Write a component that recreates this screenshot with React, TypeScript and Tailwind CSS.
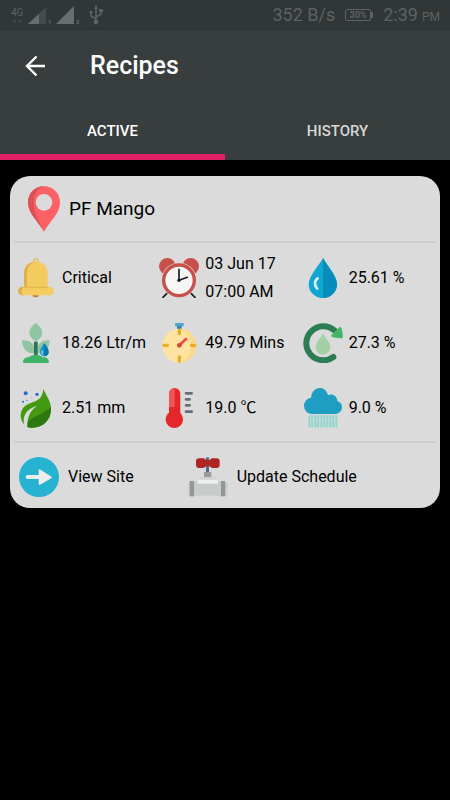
import React, { useState } from 'react';

interface IconProps {
    children: React.ReactNode;
}

const Icon: React.FC<IconProps> = ({ children }) => (
    <svg viewBox="0 0 120 120" className="h-10 w-10 shrink-0" aria-hidden="true">
        {children}
    </svg>
);

const PinIcon = () => (
    <svg viewBox="0 0 102 138" className="h-[46px] w-[34px] shrink-0" aria-hidden="true">
        <path d="M51 1C23 1 3 22 3 50c0 31 30 55 48 87 18-32 48-56 48-87C99 22 79 1 51 1Z" fill="#fd6065" />
        <path d="M51 1C23 1 3 22 3 50c0 31 30 55 48 87C38 108 20 84 20 50 20 24 32 5 51 1Z" fill="#db5156" />
        <circle cx="51" cy="49" r="25" fill="#dbdbdb" />
    </svg>
);

const BellIcon = () => (
    <Icon>
        <circle cx="59" cy="8" r="6" fill="none" stroke="#e3bd58" strokeWidth="4" />
        <path d="M49 110h20c0 6-4 8-10 8s-10-2-10-8Z" fill="#b78f36" />
        <path d="M59 11c24 0 36 15 36 36v42H24V47c0-21 12-36 35-36Z" fill="#f3cb5e" />
        <path d="M59 11c-23 0-35 15-35 36v42h9V47c0-19 10-32 26-36Z" fill="#dcb14d" />
        <rect x="7" y="86" width="106" height="26" rx="12" fill="#f3cb5e" />
        <path d="M24 86h-5a12 12 0 0 0 0 26h5c-9-5-9-20 0-26Z" fill="#dcb14d" />
        <path d="M24 86h71v4H24Z" fill="#e0b751" />
    </Icon>
);

const PlantIcon = () => (
    <Icon>
        <path d="M59 0c13 10 20 19 20 29S71 48 59 55C47 48 40 39 40 29S46 10 59 0Z" fill="#90c5a3" />
        <path d="M18 52c20-2 35 7 37 26v13C34 92 19 80 18 52Z" fill="#90c5a3" />
        <path d="M101 52C81 50 66 59 64 78v13c21 1 36-11 37-39Z" fill="#90c5a3" />
        <rect x="54" y="56" width="11" height="46" fill="#2b7652" />
        <path d="M22 120c-3-10 5-18 16-17 9-10 34-11 42 0 12-2 21 6 18 17Z" fill="#40b466" />
        <path d="M85 61c7 10 13 17 13 26a13 13 0 0 1-26 0c0-9 6-16 13-26Z" fill="#1493cb" />
        <path d="M85 61c7 10 13 17 13 26a13 13 0 0 1-13 13Z" fill="#0879ad" />
        <path d="M79 84c-2 3-1 7 1 9" fill="none" stroke="#fff" strokeWidth="3" strokeLinecap="round" />
    </Icon>
);

const AlarmIcon = () => (
    <Icon>
        <path d="M26 104 12 118M94 104l14 14" stroke="#151a20" strokeWidth="5" strokeLinecap="round" />
        <circle cx="25" cy="25" r="25" fill="#c9504a" />
        <circle cx="95" cy="25" r="25" fill="#c9504a" />
        <circle cx="60" cy="67" r="53" fill="#dbdbdb" />
        <circle cx="60" cy="67" r="46" fill="#f6f6f6" stroke="#c9504a" strokeWidth="10" />
        <path d="M60 67V34M60 67l25-9" stroke="#171c22" strokeWidth="5" strokeLinecap="round" />
        <circle cx="60" cy="67" r="5" fill="#171c22" />
    </Icon>
);

const StopwatchIcon = () => (
    <Icon>
        <rect x="54" y="6" width="14" height="12" fill="#3081a8" />
        <rect x="48" y="0" width="26" height="10" rx="3" fill="#4aa5cf" />
        <circle cx="61" cy="68" r="51" fill="#ffe4a1" />
        <path d="M61 17a51 51 0 0 1 0 102c23-10 36-28 36-51S84 27 61 17Z" fill="#fcd98a" />
        <path d="M61 22v10M61 102v12M15 67h10M97 67h10" stroke="#e7ae24" strokeWidth="10" strokeLinecap="round" />
        <path d="m61 67 20-19" stroke="#ee4d42" strokeWidth="8" strokeLinecap="round" />
        <circle cx="61" cy="67" r="7" fill="#e33f36" />
    </Icon>
);

const DropIcon = () => (
    <Icon>
        <path d="M60 0C70 21 102 52 102 79a42 41 0 0 1-85 0C17 52 50 21 60 0Z" fill="#10a6d2" />
        <path d="M60 0c10 21 42 52 42 79a42 41 0 0 1-42 41Z" fill="#078db9" />
        <path d="M44 61c-11 8-10 22-1 31" fill="none" stroke="#d8f3fa" strokeWidth="8" strokeLinecap="round" />
    </Icon>
);

const CycleIcon = () => (
    <Icon>
        <path d="M91 102A51 51 0 1 1 94 22" fill="none" stroke="#2d7d54" strokeWidth="18" strokeLinecap="round" />
        <path d="m109 14-22 21c-3 3-1 6 3 7l25 3c3 0 4-2 4-5l-4-24c-1-4-4-4-6-2Z" fill="#43b769" stroke="#43b769" strokeWidth="2" />
        <path d="M60 31c7 15 22 28 22 42a22 22 0 0 1-44 0c0-14 15-27 22-42Z" fill="#a3d1a5" />
    </Icon>
);

const LeafIcon = () => (
    <Icon>
        <circle cx="29" cy="16" r="6" fill="#286bd0" />
        <circle cx="63" cy="19" r="5" fill="#286bd0" />
        <circle cx="21" cy="41" r="3" fill="#286bd0" />
        <circle cx="33" cy="37" r="2" fill="#286bd0" />
        <circle cx="47" cy="28" r="1" fill="#286bd0" />
        <path d="M82 3c8 20 25 37 23 64-2 31-28 54-60 52-9 0-15-3-19-8C9 96 9 63 33 50 53 39 78 42 82 3Z" fill="#43990f" />
        <path d="M104 58c5 35-22 64-59 61-9 0-15-3-19-8 22-27 53-29 78-53Z" fill="#2c7811" />
        <path d="M25 114c-7-29 5-51 38-61-24 18-29 37-29 65Z" fill="#dbdbdb" />
    </Icon>
);

const ThermometerIcon = () => (
    <Icon>
        <rect x="30" y="0" width="34" height="95" rx="17" fill="#e3272a" />
        <path d="M47 0a17 17 0 0 0-17 17v40h17Z" fill="#ed5557" />
        <circle cx="46" cy="94" r="26" fill="#e3272a" />
        <path d="M81 16h17M81 34h11M81 52h11M81 71h17" stroke="#696d78" strokeWidth="8" strokeLinecap="round" />
    </Icon>
);

const RainIcon = () => (
    <Icon>
        <path
            d="M27 78a24 24 0 0 1-24-24c0-13 9-23 21-25C26 12 36 0 50 0c13 0 22 8 25 22 12-6 27 1 28 17 8 3 14 10 14 18a21 21 0 0 1-21 21Z"
            fill="#1d9ec2"
        />
        <path d="M17 81h86v39H17Z" fill="#c3dcd8" />
        <path
            d="M19 82v38M27 82v38M37 82v38M45 82v38M55 82v38M64 82v38M73 82v38M82 82v38M91 82v38M100 82v38"
            stroke="#91d3cb"
            strokeWidth="5"
            strokeDasharray="15 1 20 2"
        />
    </Icon>
);

const ArrowCircleIcon = () => (
    <Icon>
        <circle cx="60" cy="60" r="60" fill="#25b3d1" />
        <path d="M26 60h38" stroke="#eceeee" strokeWidth="12" strokeLinecap="round" />
        <path d="M62 40v41l33-20Z" fill="#eceeee" stroke="#eceeee" strokeWidth="6" strokeLinejoin="round" />
    </Icon>
);

const ValveIcon = () => (
    <Icon>
        <rect x="54" y="2" width="9" height="46" fill="#536985" />
        <path d="M33 4h13c4 0 6 5 10 5h7c4 0 6-5 10-5h13c6 0 9 3 9 8v12c0 6-3 9-9 9H73c-4 0-6-5-10-5h-7c-4 0-6 5-10 5H33c-6 0-9-3-9-9V12c0-5 3-8 9-8Z" fill="#ae2524" />
        <path d="M54 2h9v7h-9Z" fill="#536985" />
        <rect x="48" y="45" width="22" height="16" fill="#9a9c9c" />
        <rect x="35" y="60" width="48" height="12" fill="#cfd2d0" />
        <rect x="0" y="78" width="119" height="36" fill="#cbd0cd" />
        <rect x="18" y="74" width="81" height="42" fill="#c7ccc9" />
        <rect x="29" y="68" width="61" height="12" rx="2" fill="#edf0ee" />
        <rect x="5" y="72" width="13" height="46" fill="#939795" />
        <rect x="99" y="72" width="13" height="46" fill="#939795" />
    </Icon>
);

const StatusBar = () => (
    <div className="flex h-[30px] items-center justify-between bg-[#313637] px-2.5 text-[#5d6263] shadow-[inset_0_-1px_0_#2b3031]">
        <svg viewBox="0 0 94 20" className="h-5 w-[94px]" aria-label="Network and USB status" role="img">
            <text x="1" y="11" fontSize="10" fill="#5d6263" fontFamily="Roboto, sans-serif">4G</text>
            <path d="M3 16h3M9 16h3" stroke="#43494a" strokeWidth="2" />
            <path d="M18 19 36 2v17Z" fill="#454b4c" />
            <path d="M18 19 29 9v10Z" fill="#686d6e" />
            <text x="38" y="19" fontSize="6" fontWeight="700" fill="#686d6e" fontFamily="Roboto, sans-serif">1</text>
            <path d="M46 19 64 1v18Z" fill="#686d6e" />
            <text x="66" y="19" fontSize="6" fontWeight="700" fill="#686d6e" fontFamily="Roboto, sans-serif">2</text>
            <path d="M86 3v13M86 14l-5-3V7M86 12l5-3V5" fill="none" stroke="#5d6263" strokeWidth="1.6" />
            <path d="m86 0-2 4h4Z" fill="#5d6263" />
            <circle cx="86" cy="17" r="2.400" fill="#5d6263" />
            <circle cx="81" cy="7" r="1.6" fill="#5d6263" />
            <path d="M89 4h4v3h-4Z" fill="#5d6263" />
        </svg>
        <div className="flex items-center">
            <span className="text-lg leading-5">352 B/s</span>
            <span className="ml-2.5 flex h-3 w-[26px] items-center justify-center rounded-xs border border-[#5d6263] font-['Liberation_Sans_Narrow',Roboto,sans-serif] text-[9px] font-bold leading-none">
                30%
            </span>
            <span className="h-1.5 w-0.5 bg-[#5d6263]" />
            <span className="ml-2.5 flex items-baseline gap-1">
                <span className="text-lg leading-5">2:39</span>
                <span className="text-xs leading-4">PM</span>
            </span>
        </div>
    </div>
);

interface Reading {
    icon: React.ReactNode;
    lines: string[];
}

const readings: Reading[] = [
    { icon: <BellIcon />, lines: ['Critical'] },
    { icon: <AlarmIcon />, lines: ['03 Jun 17', '07:00 AM'] },
    { icon: <DropIcon />, lines: ['25.61 %'] },
    { icon: <PlantIcon />, lines: ['18.26 Ltr/m'] },
    { icon: <StopwatchIcon />, lines: ['49.79 Mins'] },
    { icon: <CycleIcon />, lines: ['27.3 %'] },
    { icon: <LeafIcon />, lines: ['2.51 mm'] },
    { icon: <ThermometerIcon />, lines: ['19.0 ℃'] },
    { icon: <RainIcon />, lines: ['9.0 %'] },
];

const tabs = ['ACTIVE', 'HISTORY'];

const RecipeCard = () => (
    <article className="mx-2.5 mt-4 rounded-[20px] bg-[#dbdbdb] text-black">
        <div className="flex h-[65px] items-center gap-2 pl-[17px]">
            <PinIcon />
            <h2 className="text-[19px] leading-6">PF Mango</h2>
        </div>
        <hr className="mx-1 border-t-2 border-[#cecece]" />
        <div className="grid grid-cols-3 pb-px pt-0.5">
            {readings.map((reading) => (
                <div key={reading.lines[0]} className="flex h-[65px] items-center gap-1.5 pl-1.5">
                    {reading.icon}
                    <div className="whitespace-nowrap text-base leading-7">
                        {reading.lines.map((line) => (
                            <p key={line}>{line}</p>
                        ))}
                    </div>
                </div>
            ))}
        </div>
        <hr className="mx-1 border-t-2 border-[#cecece]" />
        <div className="flex h-[65px] items-center gap-[54px] pl-[9px] pt-0.5">
            <button type="button" className="flex items-center gap-[9px] text-base">
                <ArrowCircleIcon />
                View Site
            </button>
            <button type="button" className="flex items-center gap-[9px] text-base">
                <ValveIcon />
                Update Schedule
            </button>
        </div>
    </article>
);

export default function App() {
    const [activeTab, setActiveTab] = useState('ACTIVE');

    return (
        <div className="min-h-screen bg-black font-[Roboto,'Noto_Sans_CJK_SC',sans-serif]">
            <StatusBar />
            <header className="bg-[#383d3e] text-white">
                <div className="flex h-[70px] items-center gap-[42px] pl-6 pt-px">
                    <button type="button" aria-label="Back">
                        <svg viewBox="0 0 24 24" className="h-6 w-6" fill="none" stroke="currentColor" strokeWidth="2.4">
                            <path d="M21 12H3.500M12.500 2.500 3 12l9.500 9.500" />
                        </svg>
                    </button>
                    <h1 className="text-[25px] font-medium leading-8">Recipes</h1>
                </div>
                <div role="tablist" className="grid grid-cols-2">
                    {tabs.map((tab) => (
                        <button
                            key={tab}
                            type="button"
                            role="tab"
                            aria-selected={activeTab === tab}
                            onClick={() => setActiveTab(tab)}
                            className={`h-[60px] border-b-6 pt-2 text-[15px] font-medium leading-5 ${
                                activeTab === tab ? 'border-[#e02164] text-white' : 'border-transparent text-[#d7d8d8]'
                            }`}
                        >
                            {tab}
                        </button>
                    ))}
                </div>
            </header>
            <main>
                <RecipeCard />
            </main>
        </div>
    );
}
